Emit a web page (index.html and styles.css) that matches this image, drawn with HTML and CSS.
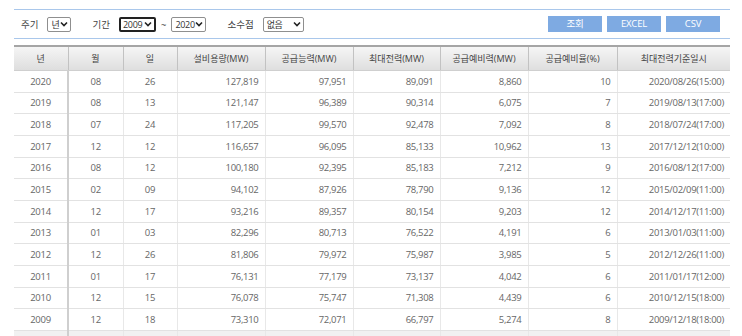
FILE: index.html
```html
<!DOCTYPE html>
<html lang="ko">
<head>
    <meta charset="UTF-8">
    <title>최대전력 실적</title>
    <link rel="stylesheet" href="styles.css">
</head>
<body>
    <div class="wrap">
        <div class="toolbar">
            <div class="filters">
                <span class="label">주기</span>
                <span class="sel w-year">년<svg viewBox="0 0 8 6"><path d="M1 1.5 4 4.5 7 1.5" /></svg></span>
                <span class="label gap">기간</span>
                <span class="sel w-from focus">2009<svg viewBox="0 0 8 6"><path d="M1 1.5 4 4.5 7 1.5" /></svg></span>
                <span class="tilde">~</span>
                <span class="sel w-to">2020<svg viewBox="0 0 8 6"><path d="M1 1.5 4 4.5 7 1.5" /></svg></span>
                <span class="label gap">소수점</span>
                <span class="sel w-dec">없음<svg viewBox="0 0 8 6"><path d="M1 1.5 4 4.5 7 1.5" /></svg></span>
            </div>
            <div class="buttons">
                <button>조회</button>
                <button>EXCEL</button>
                <button>CSV</button>
            </div>
        </div>

        <table class="grid">
            <colgroup>
                <col style="width:54px"><col style="width:55px"><col style="width:54px">
                <col style="width:88px"><col style="width:88px"><col style="width:87px">
                <col style="width:88px"><col style="width:89px"><col>
            </colgroup>
            <thead>
                <tr>
                    <th>년</th><th>월</th><th>일</th><th>설비용량(MW)</th><th>공급능력(MW)</th>
                    <th>최대전력(MW)</th><th>공급예비력(MW)</th><th>공급예비율(%)</th><th>최대전력기준일시</th>
                </tr>
            </thead>
            <tbody id="rows"></tbody>
        </table>
    </div>

    <script>
        var data = [
            ['2020','08','26','127,819','97,951','89,091','8,860','10','2020/08/26(15:00)'],
            ['2019','08','13','121,147','96,389','90,314','6,075','7','2019/08/13(17:00)'],
            ['2018','07','24','117,205','99,570','92,478','7,092','8','2018/07/24(17:00)'],
            ['2017','12','12','116,657','96,095','85,133','10,962','13','2017/12/12(10:00)'],
            ['2016','08','12','100,180','92,395','85,183','7,212','9','2016/08/12(17:00)'],
            ['2015','02','09','94,102','87,926','78,790','9,136','12','2015/02/09(11:00)'],
            ['2014','12','17','93,216','89,357','80,154','9,203','12','2014/12/17(11:00)'],
            ['2013','01','03','82,296','80,713','76,522','4,191','6','2013/01/03(11:00)'],
            ['2012','12','26','81,806','79,972','75,987','3,985','5','2012/12/26(11:00)'],
            ['2011','01','17','76,131','77,179','73,137','4,042','6','2011/01/17(12:00)'],
            ['2010','12','15','76,078','75,747','71,308','4,439','6','2010/12/15(18:00)'],
            ['2009','12','18','73,310','72,071','66,797','5,274','8','2009/12/18(18:00)']
        ];
        var html = '';
        data.forEach(function(r) {
            html += '<tr>';
            r.forEach(function(v, i) {
                html += '<td class="' + (i < 3 ? 'c' : 'r') + '">' + v + '</td>';
            });
            html += '</tr>';
        });
        html += '<tr class="sum"><td></td><td></td><td></td><td></td><td></td><td></td><td></td><td></td><td></td></tr>';
        document.getElementById('rows').innerHTML = html;
    </script>
</body>
</html>
```

FILE: styles.css
```css
body {
    margin: 0;
    padding: 0;
    background-color: #fff;
    font-family: "Open Sans", "Noto Sans CJK KR", sans-serif;
    font-size: 9.5px;
    color: #555;
}
.wrap {
    width: 716px;
    margin-left: 14px;
    padding-top: 9px;
}
.toolbar {
    display: flex;
    justify-content: space-between;
    align-items: center;
    height: 28px;
    border-top: 1px solid #a9c7eb;
    border-bottom: 1px solid #a9c7eb;
}
.filters {
    display: flex;
    align-items: center;
    padding-left: 7px;
    color: #444;
    font-size: 9.5px;
}
.label {
    margin-right: 9px;
}
.label.gap {
    margin-left: 21px;
}
.sel {
    display: flex;
    align-items: center;
    justify-content: space-between;
    box-sizing: border-box;
    height: 15px;
    padding: 0 2px 0 3px;
    border: 1px solid #8f8f8f;
    border-radius: 2px;
    font-size: 9px;
    letter-spacing: -0.3px;
    color: #333;
    background-color: #fff;
}
.sel svg {
    width: 8px;
    height: 6px;
    fill: none;
    stroke: #222;
    stroke-width: 1.6;
}
.sel.focus {
    border: 2px solid #222;
    padding-left: 2px;
}
.w-year { width: 24px; }
.w-from { width: 37px; }
.w-to { width: 35px; }
.w-dec { width: 41px; }
.tilde {
    margin: 0 5px;
}
.buttons {
    display: flex;
    gap: 5px;
    margin-right: 10px;
}
.buttons button {
    width: 54px;
    height: 16px;
    border: none;
    padding: 0;
    background-color: #7eaae2;
    color: #fff;
    font-family: "Open Sans", "Noto Sans CJK KR", sans-serif;
    font-size: 9.5px;
    letter-spacing: -0.2px;
    line-height: 16px;
}
.grid {
    width: 716px;
    margin-top: 6px;
    border-collapse: collapse;
    table-layout: fixed;
}
.grid th {
    height: 23px;
    padding: 0;
    border-top: 2px solid #a5a5a5;
    border-right: 1px solid #c2c2c2;
    border-bottom: 1px solid #cfcfcf;
    background: linear-gradient(#f5f5f5, #dedede);
    font-weight: normal;
    font-size: 9px;
    color: #444;
    text-align: center;
}
.grid th:last-child {
    border-right: none;
}
.grid td {
    height: 20.67px;
    padding: 0 6px;
    border-right: 1px solid #e8e8e8;
    border-bottom: 1px solid #e2e2e2;
    color: #666;
    letter-spacing: -0.3px;
    white-space: nowrap;
}
.grid td:first-child {
    border-right: 2px solid #cfcfcf;
}
.grid td:last-child {
    border-right: none;
}
.grid td.c {
    text-align: center;
}
.grid td.r {
    text-align: right;
}
.grid tr.sum td {
    background-color: #f1f1f1;
}
```
